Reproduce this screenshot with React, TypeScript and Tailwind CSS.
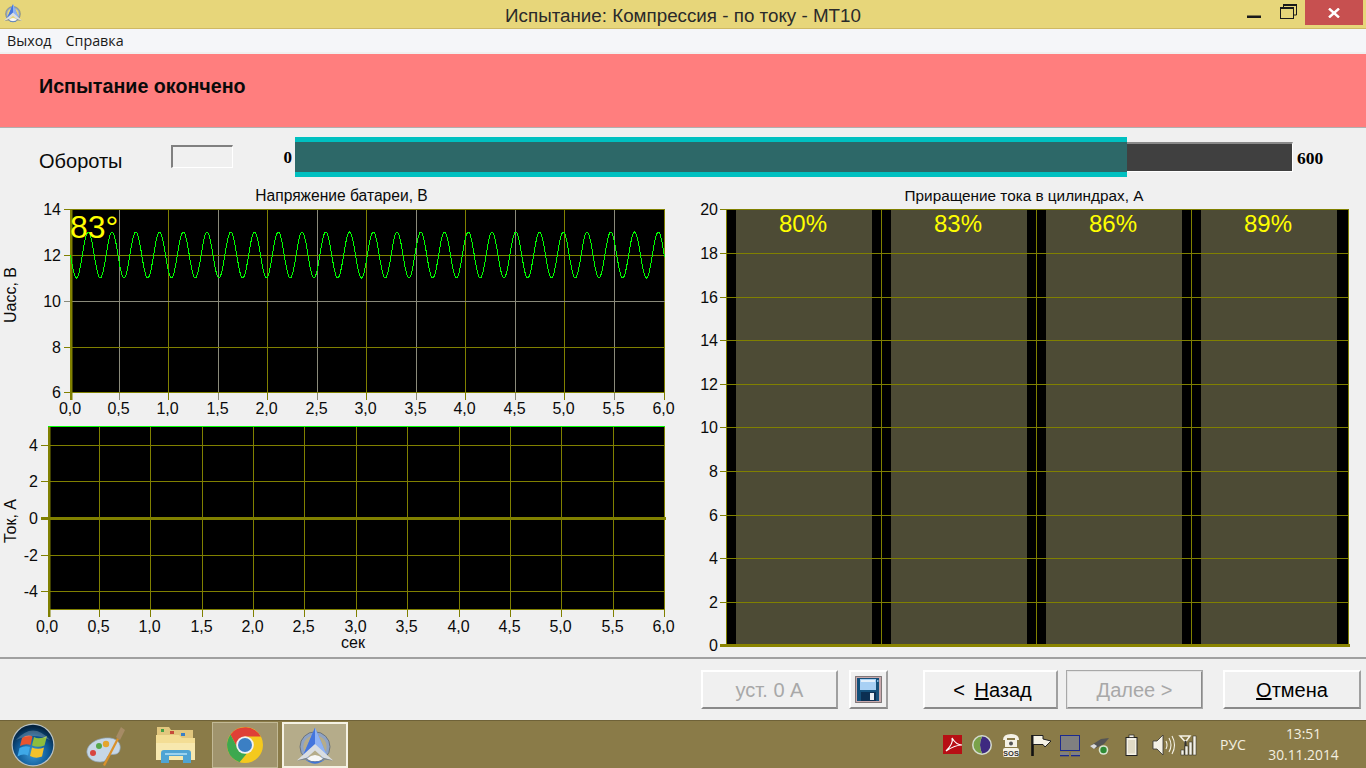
import React from "react";

const OL = "#808000";
const LF = "Liberation Sans, Arial, sans-serif";

function wave() {
  let d = "";
  for (let x = 70.5; x <= 665; x += 0.75) {
    const y = 255 + 23 * Math.sin((2 * Math.PI * (x - 70.5)) / 23.75);
    d += (d ? "L" : "M") + x.toFixed(2) + " " + y.toFixed(2);
  }
  return d;
}

function Label({ x, y, a = "middle", s = 16, children, c = "#0a0a0a", tr }: any) {
  return (
    <text x={x} y={y} textAnchor={a} fontSize={s} fill={c} fontFamily={LF} transform={tr}>
      {children}
    </text>
  );
}

const xLabels = ["0,0", "0,5", "1,0", "1,5", "2,0", "2,5", "3,0", "3,5", "4,0", "4,5", "5,0", "5,5", "6,0"];

function VoltageChart() {
  const ys = [209.5, 255.5, 301.5, 347.5, 392.5];
  const vals = ["14", "12", "10", "8", "6"];
  const step = (665 - 70.5) / 12;
  return (
    <svg width="680" height="218" viewBox="0 206 680 218" className="block overflow-visible">
      <rect x="70" y="209" width="595" height="183.5" fill="#000" />
      {xLabels.map((l, i) => {
        const x = Math.round(69 + step * i) + 0.5;
        return (
          <g key={l}>
            {i > 0 && <line x1={x} x2={x} y1={209} y2={400} stroke={i % 2 ? "#8a8a7a" : OL} />}
            <Label x={i === 0 ? 70 : x - 1} y={414}>{l}</Label>
          </g>
        );
      })}
      {ys.map((y, i) => (
        <g key={y}>
          <line x1={64} x2={665} y1={y} y2={y} stroke={i === 2 ? "#8a8a7a" : OL} />
          <Label x={61} y={y + 5} a="end">{vals[i]}</Label>
        </g>
      ))}
      <rect x="70" y="209" width="2.5" height="191" fill={OL} />
      <path d={wave()} fill="none" stroke="#00ff00" strokeWidth="1" shapeRendering="crispEdges" />
      <Label x={70} y={238} a="start" s={32} c="#ffff00">83°</Label>
      <Label x={0} y={0} tr="translate(16 295) rotate(-90)">Uacc, B</Label>
    </svg>
  );
}

function CurrentChart() {
  const ys = [445.5, 481.5, 555.5, 591.5];
  const vals = ["4", "2", "-2", "-4"];
  const step = (665 - 48.5) / 12;
  return (
    <svg width="680" height="233" viewBox="0 424 680 233" className="block overflow-visible">
      <rect x="48" y="427" width="617" height="183" fill="#000" />
      <line x1="48" x2="665" y1="426.5" y2="426.5" stroke="#00ff00" />
      {xLabels.map((l, i) => {
        const x = Math.floor(48 + step * i) + 0.5;
        return (
          <g key={l}>
            {i > 0 && <line x1={x} x2={x} y1={427} y2={617} stroke={OL} />}
            <Label x={i === 0 ? 47 : x - 1} y={632}>{l}</Label>
          </g>
        );
      })}
      {ys.map((y, i) => (
        <g key={y}>
          <line x1={41} x2={665} y1={y} y2={y} stroke={OL} />
          <Label x={38} y={y + 5} a="end">{vals[i]}</Label>
        </g>
      ))}
      <rect x="41" y="517" width="625" height="3" fill={OL} />
      <Label x={38} y={523.5} a="end">0</Label>
      <line x1="48" x2="665" y1="609.5" y2="609.5" stroke={OL} />
      <rect x="48" y="427" width="2.5" height="190" fill={OL} />
      <Label x={0} y={0} tr="translate(16 521) rotate(-90)">Ток, А</Label>
      <Label x={353} y={648}>сек</Label>
    </svg>
  );
}

function BarsChart() {
  const vals = ["20", "18", "16", "14", "12", "10", "8", "6", "4", "2", "0"];
  const ys = [209.5, 253.5, 297.5, 340.5, 384.5, 427.5, 471.5, 515.5, 558.5, 602.5, 645.5];
  const bars = [
    [736, "80%"],
    [891, "83%"],
    [1046, "86%"],
    [1201, "89%"],
  ] as const;
  return (
    <svg width="686" height="451" viewBox="680 206 686 451" className="block overflow-visible">
      <rect x="726" y="209" width="623" height="436" fill="#000" />
      {bars.map(([x, l]) => (
        <rect key={l} x={x} y={209} width={136} height={436} fill="#4d4b35" />
      ))}
      {[726.5, 881.5, 1036.5, 1191.5, 1348.5].map((x) => (
        <line key={x} x1={x} x2={x} y1={209} y2={645} stroke={OL} />
      ))}
      {ys.map((y, i) => (
        <g key={y}>
          {i < 10 && <line x1={720} x2={1349} y1={y} y2={y} stroke={OL} />}
          <Label x={718} y={y + 5} a="end">{vals[i]}</Label>
        </g>
      ))}
      <rect x="720" y="644" width="630" height="3" fill="#8a8400" />
      {bars.map(([x, l]) => (
        <Label key={l} x={x + 67} y={232} s={24} c="#ffff00">{l}</Label>
      ))}
    </svg>
  );
}

function AppLogo({ size = 44 }: { size?: number }) {
  return (
    <svg width={size} height={size} viewBox="0 0 44 44">
      <circle cx="22" cy="24" r="14.5" fill="none" stroke="#8fa3c4" strokeWidth="3.5" />
      <circle cx="22" cy="24" r="16.5" fill="none" stroke="#55606f" strokeWidth="0.8" />
      <path d="M22 3 L9 33 L22 25 L35 33 Z" fill="#5d8bea" />
      <path d="M22 3 L22 25 L35 33 Z" fill="#8fb2f4" />
      <path d="M22 3 L9 33 L22 25 Z" fill="#4475dd" />
      <path d="M2 39 L22 21 L42 39 L31 36 L22 28 L13 36 Z" fill="#d9dde2" />
      <path d="M13 37 Q22 29 31 37 Q22 43 13 37 Z" fill="#f7f7f7" />
      <path d="M11 38 Q22 47 33 38 Q22 43 11 38Z" fill="#3f74d8" />
      <path d="M2 39 L13 36 L14 38 Z" fill="#7d8793" />
      <path d="M42 39 L31 36 L30 38 Z" fill="#7d8793" />
    </svg>
  );
}

function Orb() {
  return (
    <svg width="44" height="44" viewBox="0 0 44 44">
      <defs>
        <radialGradient id="orb" cx="50%" cy="70%" r="65%">
          <stop offset="0" stopColor="#3d9ad8" />
          <stop offset="0.6" stopColor="#0f5a97" />
          <stop offset="1" stopColor="#04233f" />
        </radialGradient>
      </defs>
      <circle cx="22" cy="22" r="21.5" fill="#b9c2c4" />
      <circle cx="22" cy="22" r="20.3" fill="url(#orb)" />
      <path d="M11 15 Q17 11 21.5 13.5 L19.5 22 Q15 20 9 23 Z" fill="#e8542f" />
      <path d="M23 14 Q28 17 36 13 L33.5 22.5 Q27 25 21 22.5 Z" fill="#8ebd3d" />
      <path d="M8.5 25 Q14 22 19 24 L17 32.5 Q12 30 6.5 33.5 Z" fill="#3fa8e8" />
      <path d="M21 24.5 Q27 27 33 24.5 L31 33.5 Q25 36 19 33 Z" fill="#f5c22c" />
      <path d="M5 17 Q22 -2 39 17 Q22 9 5 17 Z" fill="#ffffff" opacity="0.22" />
    </svg>
  );
}

function Palette() {
  return (
    <svg width="40" height="44" viewBox="0 0 40 44">
      <path d="M1 30 C0 21 12 14 24 15 C34 16 36 24 33 29 C30 33 25 30 22 33 C20 36 20 39 14 39 C8 39 2 36 1 30Z" fill="#c6d7e6" stroke="#8ea5ba" strokeWidth="0.7" />
      <circle cx="7" cy="30" r="3" fill="#d8453f" />
      <circle cx="13" cy="23" r="3" fill="#55a84a" />
      <circle cx="20" cy="21" r="3.2" fill="#e5a52c" />
      <path d="M17 42 L31 15 L33 16 L19 43Z" fill="#d9912b" />
      <path d="M30 14 L35 4 L39 7 L34 17 Z" fill="#a68b65" />
    </svg>
  );
}

function Folder() {
  return (
    <svg width="40" height="44" viewBox="0 0 40 44">
      <path d="M1 4 H13 L15 7 H37 V16 H1Z" fill="#e2c77e" />
      <rect x="5" y="6" width="3" height="3" fill="#45a045" />
      <rect x="14" y="8" width="4" height="3" fill="#c64a3a" />
      <rect x="25" y="10" width="4" height="3" fill="#3a80c6" />
      <path d="M0 12 H23 L26 15 H39 V37 H0Z" fill="#f3dd94" />
      <path d="M0 20 H39 V37 H0Z" fill="#f7e8ae" />
      <path d="M5 40 V30 Q5 27 8 27 H32 Q35 27 35 30 V40 H27 V33 H13 V40 Z" fill="#4fa4d4" />
      <path d="M9 30 H31 V32 H9Z" fill="#9ad2ef" />
    </svg>
  );
}

function Chrome() {
  return (
    <svg width="36" height="36" viewBox="0 0 36 36">
      <circle cx="18" cy="18" r="18" fill="#f4c91e" />
      <path d="M3.5 7.5 A18 18 0 0 1 33.8 9.5 L18 9.5 L11 22 Z" fill="#df4037" />
      <path d="M3.5 7.5 L11 22 L19.5 27 L12.5 35.2 A18 18 0 0 1 3.5 7.5Z" fill="#3da84f" />
      <circle cx="18" cy="18" r="8.8" fill="#f2f2f2" />
      <circle cx="18" cy="18" r="7" fill="#3b7fc4" />
    </svg>
  );
}

function Tray() {
  const W = "#f5f2e6";
  return (
    <div className="flex items-center h-full ml-[938px]">
      <svg width="30" height="30" viewBox="0 0 30 30">
        <rect x="5" y="5" width="19" height="19" fill="#b70f14" />
        <path d="M8 21 C13 16 15 11 14 8 C17 13 20 15 24 15 C19 15 14 17 8 21Z" fill="none" stroke="#fff" strokeWidth="1.2" />
      </svg>
      <svg width="30" height="30" viewBox="0 0 30 30">
        <circle cx="14" cy="15" r="10" fill="#d5dccf" />
        <path d="M14 6.5 A8.5 8.5 0 0 1 14 23.5 Q10 15 14 6.5Z" fill="#3e2a80" />
        <path d="M14 6.5 Q10 15 14 23.5 A8.5 8.5 0 0 1 14 6.5Z" fill="#7aa24a" />
      </svg>
      <svg width="28" height="30" viewBox="0 0 28 30">
        <path d="M5 10 Q5 4 13 4 Q21 4 21 10 L17 10 L17 8 L9 8 L9 10Z" fill={W} />
        <rect x="7" y="10" width="12" height="7" fill={W} />
        <circle cx="13" cy="13.5" r="2" fill="#555" />
        <rect x="5" y="18" width="16" height="9" rx="2" fill={W} />
        <text x="13" y="25.5" textAnchor="middle" fontSize="7.5" fontWeight="700" fontFamily={LF} fill="#333">SOS</text>
      </svg>
      <svg width="32" height="30" viewBox="0 0 32 30">
        <path d="M6.5 5 V26" stroke="#111" strokeWidth="2.6" />
        <path d="M7 5.5 H17 V9 L25 11 L19 17 L17 14.5 H7Z" fill={W} stroke="#222" strokeWidth="1" />
      </svg>
      <svg width="29" height="30" viewBox="0 0 29 30">
        <rect x="2.5" y="5.5" width="19" height="15" fill="#808080" stroke="#1c2a90" />
        <rect x="2" y="22" width="9" height="4" fill="#808080" />
        <rect x="13" y="22" width="9" height="4" fill="#808080" />
        <rect x="2" y="25" width="9" height="1.3" fill="#1c2a90" />
        <rect x="13" y="25" width="9" height="1.3" fill="#1c2a90" />
      </svg>
      <svg width="31" height="30" viewBox="0 0 31 30">
        <path d="M3 16 L14 9 L22 8 L17 14 L7 19Z" fill="#555" />
        <path d="M3 16 L7 14 L10 16 L7 19Z" fill="#ddd" />
        <circle cx="16.5" cy="20" r="4.8" fill="#d8e4d0" />
        <circle cx="16.5" cy="20" r="3.2" fill="#2e8b35" />
      </svg>
      <svg width="34" height="30" viewBox="0 0 34 30">
        <rect x="8" y="7.5" width="11" height="18" fill={W} stroke="#222" strokeWidth="1" />
        <rect x="11" y="5" width="5" height="2.5" fill={W} stroke="#222" strokeWidth="0.7" />
        <rect x="10" y="10" width="7" height="13.5" fill="#8a7b48" opacity="0.2" />
      </svg>
      <svg width="25" height="30" viewBox="0 0 25 30">
        <path d="M1 11 H5 L11 5 V25 L5 19 H1Z" fill={W} stroke="#333" strokeWidth="0.8" />
        <path d="M14 11 Q16 15 14 19M17 8 Q21 15 17 22M20 6 Q25 15 20 24" fill="none" stroke={W} strokeWidth="1.1" />
      </svg>
      <svg width="34" height="30" viewBox="0 0 34 30">
        <path d="M3 6 H13 L8.5 12 Z" fill="none" stroke={W} strokeWidth="1.5" />
        <rect x="7.5" y="11" width="2" height="14" fill="#333" />
        <rect x="4" y="20" width="3" height="5" fill={W} stroke="#222" strokeWidth="0.5" />
        <rect x="8" y="16" width="3" height="9" fill={W} stroke="#222" strokeWidth="0.5" />
        <rect x="12" y="12" width="3" height="13" fill={W} stroke="#222" strokeWidth="0.5" />
        <rect x="16" y="6" width="3" height="19" fill={W} stroke="#222" strokeWidth="0.5" />
      </svg>
      <div className="w-[34px] text-[14px] text-[#f3efe0] font-['Open_Sans'] ml-[9px]">РУС</div>
      <div className="w-[99px] flex flex-col items-center text-[#f3efe0] text-[13.8px] leading-[21px] font-['Open_Sans'] mt-[-1px]">
        <span>13:51</span>
        <span>30.11.2014</span>
      </div>
    </div>
  );
}

function SaveIcon() {
  return (
    <svg width="27" height="27" viewBox="0 0 27 27">
      <rect x="0.5" y="0.5" width="26" height="26" fill="#c9a9ad" stroke="#222" strokeDasharray="1 1" />
      <path d="M2 2 H24 V25 H2Z" fill="#14507a" />
      <rect x="5" y="3" width="16" height="11" fill="#a8d0f4" />
      <rect x="6" y="4" width="14" height="2" fill="#e4f0fb" />
      <rect x="6" y="16" width="15" height="9" fill="#0b2f52" />
      <rect x="15" y="17" width="4" height="7" fill="#e8eef4" />
      <rect x="22" y="4" width="1.5" height="2" fill="#7fb2dc" />
    </svg>
  );
}

function Btn({ w, children, disabled, strong }: { w: string; children: React.ReactNode; disabled?: boolean; strong?: boolean }) {
  return (
    <div
      className={`${w} h-[39px] flex items-center justify-center text-[20px] bg-[#f0f0f0] border-2 ${
        strong
          ? "border-t-[#e4e4e4] border-l-[#e4e4e4] border-r-[#8a8a8a] border-b-[#8a8a8a] outline outline-1 -outline-offset-1 outline-[#a8a8a8]"
          : "border-t-white border-l-white border-r-[#a0a0a0] border-b-[#8a8a8a]"
      } ${disabled ? "text-[#a8a8a8]" : "text-black"}`}
    >
      {children}
    </div>
  );
}

export default function App() {
  return (
    <div className="w-[1366px] h-[768px] flex flex-col overflow-hidden bg-[#f0f0f0] font-['Liberation_Sans']">
      {/* title bar */}
      <div className="h-[29px] shrink-0 bg-[#e7d67a] border-b border-b-[#cfb964] grid grid-cols-[1fr_auto_1fr]">
        <div className="pl-[3px] pt-[3px]">
          <AppLogo size={20} />
        </div>
        <div className="text-[18.8px] leading-[31px] text-[#2a2a2a]">Испытание: Компрессия - по току - МТ10</div>
        <div className="flex justify-end items-start pr-[3px]">
          <svg width="58" height="26" viewBox="0 0 58 26">
            <rect x="0" y="15.5" width="14" height="2.5" fill="#1a1a1a" />
            <rect x="33.5" y="7.5" width="13" height="11" fill="none" stroke="#1a1a1a" />
            <rect x="33" y="7" width="14" height="2" fill="#1a1a1a" />
            <path d="M36.5 7 V4.5 H49.5 V15 H47" fill="none" stroke="#1a1a1a" />
            <rect x="36" y="4" width="14" height="2" fill="#1a1a1a" />
          </svg>
          <div className="w-[58px] h-[25px] bg-[#c75050] flex items-center justify-center">
            <svg width="12" height="10" viewBox="0 0 12 10">
              <path d="M1 0.5 L11 9.5 M11 0.5 L1 9.5" stroke="#fff" strokeWidth="2.4" />
            </svg>
          </div>
        </div>
      </div>

      {/* menu */}
      <div className="h-[25px] shrink-0 bg-[#f5f6f9] border-b-2 border-b-[#f0f0f0] flex items-center pl-[7px] gap-[14px] text-[14.3px] text-[#1a1a1a] font-['Open_Sans']">
        <span>Выход</span>
        <span>Справка</span>
      </div>

      {/* banner */}
      <div className="h-[74px] shrink-0 bg-[#ff7e7e] border-b border-b-[#b0b0b0] pl-[39px] pt-[20px] text-[19.7px] leading-[24px] font-bold text-[#0a0a0a]">
        Испытание окончено
      </div>

      {/* rpm row */}
      <div className="h-[58px] shrink-0 flex items-start">
        <div className="w-[171px] pl-[39px] pt-[21px] text-[20px] leading-[24px] text-[#0a0a0a]">Обороты</div>
        <div className="mt-[17px] w-[62px] h-[23px] border-t-2 border-l-2 border-t-[#808080] border-l-[#808080] border-r border-b border-r-white border-b-white" />
        <div className="w-[62px] pr-[3px] pt-[20px] text-right text-[17px] leading-[20px] font-['Liberation_Serif'] font-bold">0</div>
        <div className="mt-[9px] w-[832px] h-[40px] bg-[#2d6868] border-y-[5px] border-y-[#00c0c0]" />
        <div className="mt-[14px] w-[166px] h-[30px] bg-[#404040] border-t-2 border-t-[#8a8a8a] border-r border-b border-r-white border-b-white" />
        <div className="pl-[4px] pt-[20px] text-[17.5px] leading-[20px] font-['Liberation_Serif'] font-bold">600</div>
      </div>

      {/* charts */}
      <div className="flex shrink-0">
        <div className="w-[680px]">
          <div className="h-[20px] text-center text-[15.6px] leading-[20px] text-[#0a0a0a] pl-[3px]">Напряжение батареи, В</div>
          <VoltageChart />
          <CurrentChart />
        </div>
        <div className="w-[686px]">
          <div className="h-[20px] text-center text-[15.3px] leading-[20px] text-[#0a0a0a] pl-[2px]">Приращение тока в цилиндрах, А</div>
          <BarsChart />
        </div>
      </div>

      {/* buttons */}
      <div className="h-[63px] shrink-0 border-t-2 border-t-[#a0a0a0] flex justify-end items-start pt-[11px] pr-[5px]">
        <Btn w="w-[137px]" disabled>уст. 0 А</Btn>
        <div className="ml-[11px] w-[39px] h-[39px] flex items-center justify-center border-2 border-t-white border-l-white border-r-[#a0a0a0] border-b-[#8a8a8a]">
          <SaveIcon />
        </div>
        <div className="ml-[35px]">
          <Btn w="w-[135px]"><span className="pl-[4px]">&lt; <u className="ml-[4px]">Н</u>азад</span></Btn>
        </div>
        <div className="ml-[8px]">
          <Btn w="w-[137px]" disabled strong><u>Д</u>алее &gt;</Btn>
        </div>
        <div className="ml-[20px]">
          <Btn w="w-[138px]"><u>О</u>тмена</Btn>
        </div>
      </div>

      {/* taskbar */}
      <div className="relative h-[48px] shrink-0 bg-[#8a7b48] border-t border-t-[#6f6238] flex">
        <div className="absolute left-0 top-0 h-full flex items-center">
          <div className="ml-[11px]"><Orb /></div>
          <div className="ml-[31px]"><Palette /></div>
          <div className="ml-[30px]"><Folder /></div>
          <div className="ml-[16px] w-[66px] h-[46px] bg-[#a0946d] border border-[#c2b995] flex items-center justify-center"><Chrome /></div>
          <div className="ml-[4px] w-[66px] h-[46px] bg-[#b5ac8a] border-2 border-[#f5f2e4] flex items-center justify-center"><AppLogo size={40} /></div>
        </div>
        <Tray />
      </div>
    </div>
  );
}
